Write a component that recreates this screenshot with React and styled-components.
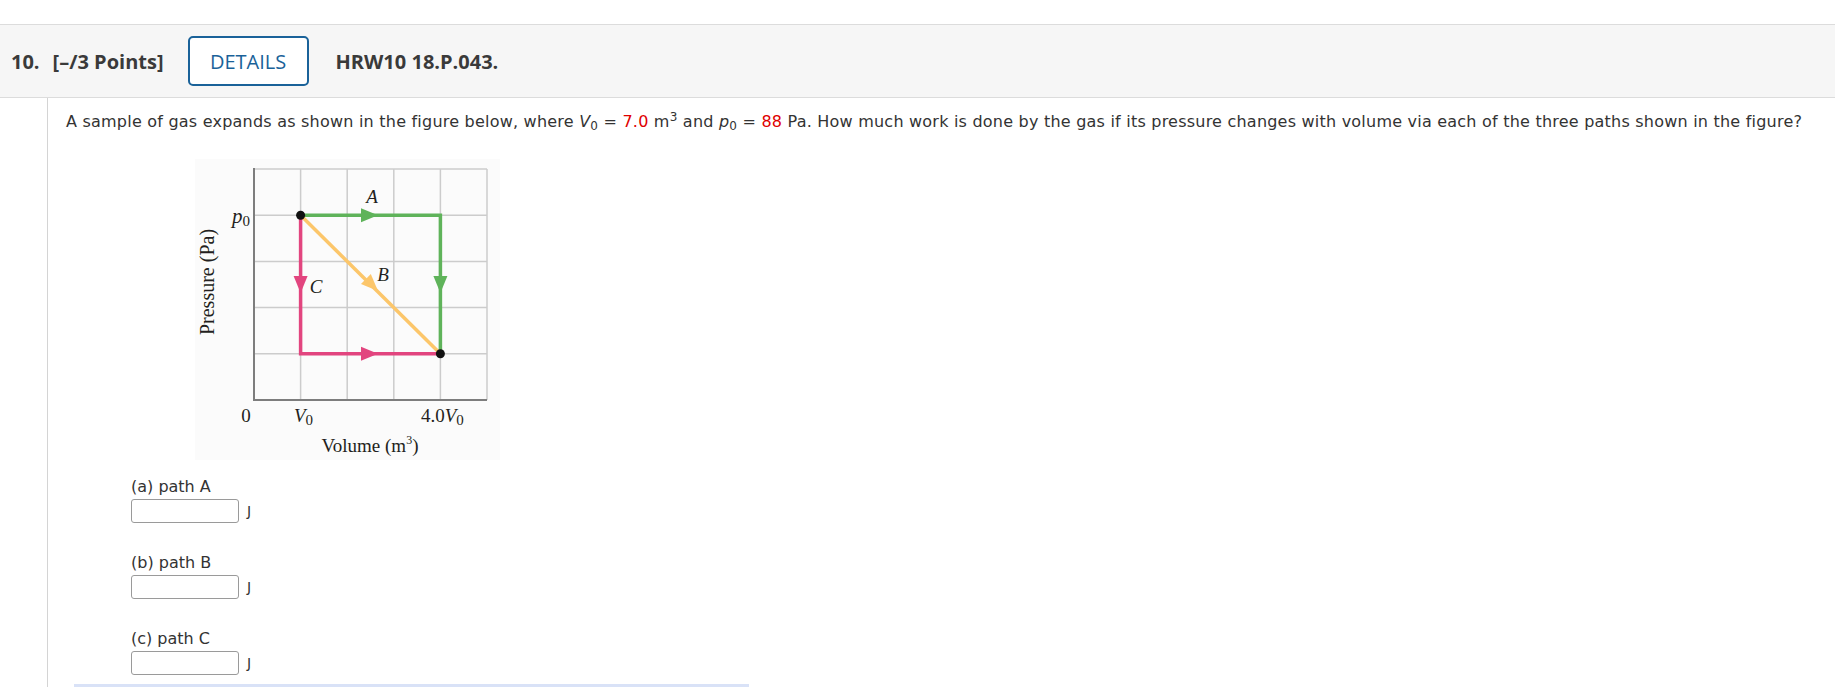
import React from "react";
import styled, { createGlobalStyle } from "styled-components";

const GlobalStyle = createGlobalStyle`
  body {
    margin: 0;
    background: #ffffff;
    font-family: "DejaVu Sans", Verdana, sans-serif;
    color: #333333;
  }
`;

const Page = styled.div`
  padding-top: 24px;
  width: 1835px;
  height: 663px;
  overflow: hidden;
`;

const Header = styled.div`
  display: flex;
  align-items: center;
  height: 72px;
  padding-left: 11px;
  background: #f6f6f6;
  border-top: 1px solid #dcdcdc;
  border-bottom: 1px solid #dcdcdc;
  font-family: "Open Sans", "Noto Sans", sans-serif;
  font-size: 20px;
  font-weight: 700;
  color: #3a3a3a;
`;

const Number = styled.span`
  margin-right: 13px;
`;

const DetailsButton = styled.button`
  margin-left: 24px;
  width: 121px;
  height: 50px;
  border: 2px solid #1a6299;
  border-radius: 5px;
  background: #ffffff;
  color: #1a6299;
  font-family: "Open Sans", "Noto Sans", sans-serif;
  font-size: 20px;
  font-weight: 400;
  padding: 0;
`;

const Title = styled.span`
  margin-left: 27px;
`;

const Body = styled.div`
  margin-left: 47px;
  border-left: 1px solid #d4d4d4;
  padding: 14px 0 0 18px;
  height: 600px;
`;

const Question = styled.p`
  margin: 0;
  font-size: 16px;
  line-height: 20px;
  letter-spacing: 0.22px;
  white-space: nowrap;
`;

const Red = styled.span`
  color: #e00000;
`;

const Sub = styled.sub`
  font-size: 12px;
  vertical-align: -3px;
  line-height: 0;
`;

const Sup = styled.sup`
  font-size: 12px;
  vertical-align: 6px;
  line-height: 0;
`;

const FigureBox = styled.div`
  margin: 27px 0 0 129px;
  width: 305px;
  height: 301px;
  background: #fbfbfb;
`;

const Parts = styled.div`
  margin: 17px 0 0 65px;
  display: flex;
  flex-direction: column;
  gap: 30px;
`;

const Part = styled.div`
  display: flex;
  flex-direction: column;
  gap: 2px;
`;

const PartLabel = styled.div`
  font-size: 16px;
  line-height: 20px;
`;

const AnswerRow = styled.div`
  display: flex;
  align-items: center;
`;

const AnswerInput = styled.input`
  box-sizing: border-box;
  width: 108px;
  height: 24px;
  border: 1px solid #9a9a9a;
  border-radius: 3px;
  background: #ffffff;
  margin: 0;
`;

const Unit = styled.span`
  margin-left: 8px;
  font-size: 14px;
`;

const FooterBar = styled.div`
  margin: 9px 0 0 8px;
  width: 675px;
  height: 6px;
  background: #d9e2f7;
`;

const serif = '"Liberation Serif", "Times New Roman", serif';
const ink = "#231f20";

function Arrow({ x, y, angle, color }) {
  return (
    <polygon
      points="0,0 -17,-7 -17,7"
      fill={color}
      transform={`translate(${x} ${y}) rotate(${angle})`}
    />
  );
}

function PVChart() {
  const xs = [59, 105.6, 152.2, 198.8, 245.4, 292];
  const ys = [10, 56.2, 102.4, 148.6, 194.8, 241];
  const green = "#5fb35a";
  const pink = "#e2457f";
  const yellow = "#fcc66a";
  return (
    <svg width="305" height="301" viewBox="0 0 305 301">
      {xs.slice(1).map((x) => (
        <line key={"v" + x} x1={x} y1={10} x2={x} y2={241} stroke="#cccccc" strokeWidth="1.5" />
      ))}
      {ys.slice(0, 5).map((y) => (
        <line key={"h" + y} x1={59} y1={y} x2={292} y2={y} stroke="#cccccc" strokeWidth="1.5" />
      ))}
      <line x1={59} y1={9} x2={59} y2={242} stroke="#7d7d7d" strokeWidth="2" />
      <line x1={58} y1={241} x2={292} y2={241} stroke="#7d7d7d" strokeWidth="2" />

      <line x1={105.6} y1={56.2} x2={245.4} y2={194.8} stroke={yellow} strokeWidth="3.5" />
      <polyline points="105.6,56.2 105.6,194.8 245.4,194.8" fill="none" stroke={pink} strokeWidth="3.5" />
      <polyline points="105.6,56.2 245.4,56.2 245.4,194.8" fill="none" stroke={green} strokeWidth="3.5" />

      <Arrow x={183} y={56.2} angle={0} color={green} />
      <Arrow x={245.4} y={134} angle={90} color={green} />
      <Arrow x={105.6} y={134} angle={90} color={pink} />
      <Arrow x={183} y={194.8} angle={0} color={pink} />
      <Arrow x={183} y={132} angle={44.6} color={yellow} />

      <circle cx={105.6} cy={56.2} r={4.5} fill="#111" />
      <circle cx={245.4} cy={194.8} r={4.5} fill="#111" />

      <g fontFamily={serif} fill={ink} fontSize="19">
        <text x={177} y={44} fontStyle="italic" textAnchor="middle">A</text>
        <text x={188} y={122} fontStyle="italic" textAnchor="middle">B</text>
        <text x={121} y={134} fontStyle="italic" textAnchor="middle">C</text>

        <text x={37} y={64} fontStyle="italic" fontSize="21">p<tspan fontStyle="normal" fontSize="15" dy="3">0</tspan></text>

        <text x={51} y={263} textAnchor="middle">0</text>
        <text x={99} y={263} fontStyle="italic">V<tspan fontStyle="normal" fontSize="15" dy="3">0</tspan></text>
        <text x={226} y={263}>4.0<tspan fontStyle="italic">V</tspan><tspan fontSize="15" dy="3">0</tspan></text>

        <text x={175} y={293} textAnchor="middle">Volume (m<tspan fontSize="12" dy="-8">3</tspan><tspan dy="8">)</tspan></text>
        <text transform="translate(19 123) rotate(-90)" textAnchor="middle" fontSize="20">Pressure (Pa)</text>
      </g>
    </svg>
  );
}

const parts = [
  { id: "a", label: "(a) path A" },
  { id: "b", label: "(b) path B" },
  { id: "c", label: "(c) path C" },
];

export default function App() {
  return (
    <Page>
      <GlobalStyle />
      <Header>
        <Number>10.</Number>
        <span>[–/3 Points]</span>
        <DetailsButton>DETAILS</DetailsButton>
        <Title>HRW10 18.P.043.</Title>
      </Header>
      <Body>
        <Question>
          A sample of gas expands as shown in the figure below, where <i>V</i>
          <Sub>0</Sub> = <Red>7.0</Red> m<Sup>3</Sup> and <i>p</i>
          <Sub>0</Sub> = <Red>88</Red> Pa. How much work is done by the gas if its pressure
          changes with volume via each of the three paths shown in the figure?
        </Question>
        <FigureBox>
          <PVChart />
        </FigureBox>
        <Parts>
          {parts.map((p) => (
            <Part key={p.id}>
              <PartLabel>{p.label}</PartLabel>
              <AnswerRow>
                <AnswerInput type="text" />
                <Unit>J</Unit>
              </AnswerRow>
            </Part>
          ))}
        </Parts>
        <FooterBar />
      </Body>
    </Page>
  );
}
